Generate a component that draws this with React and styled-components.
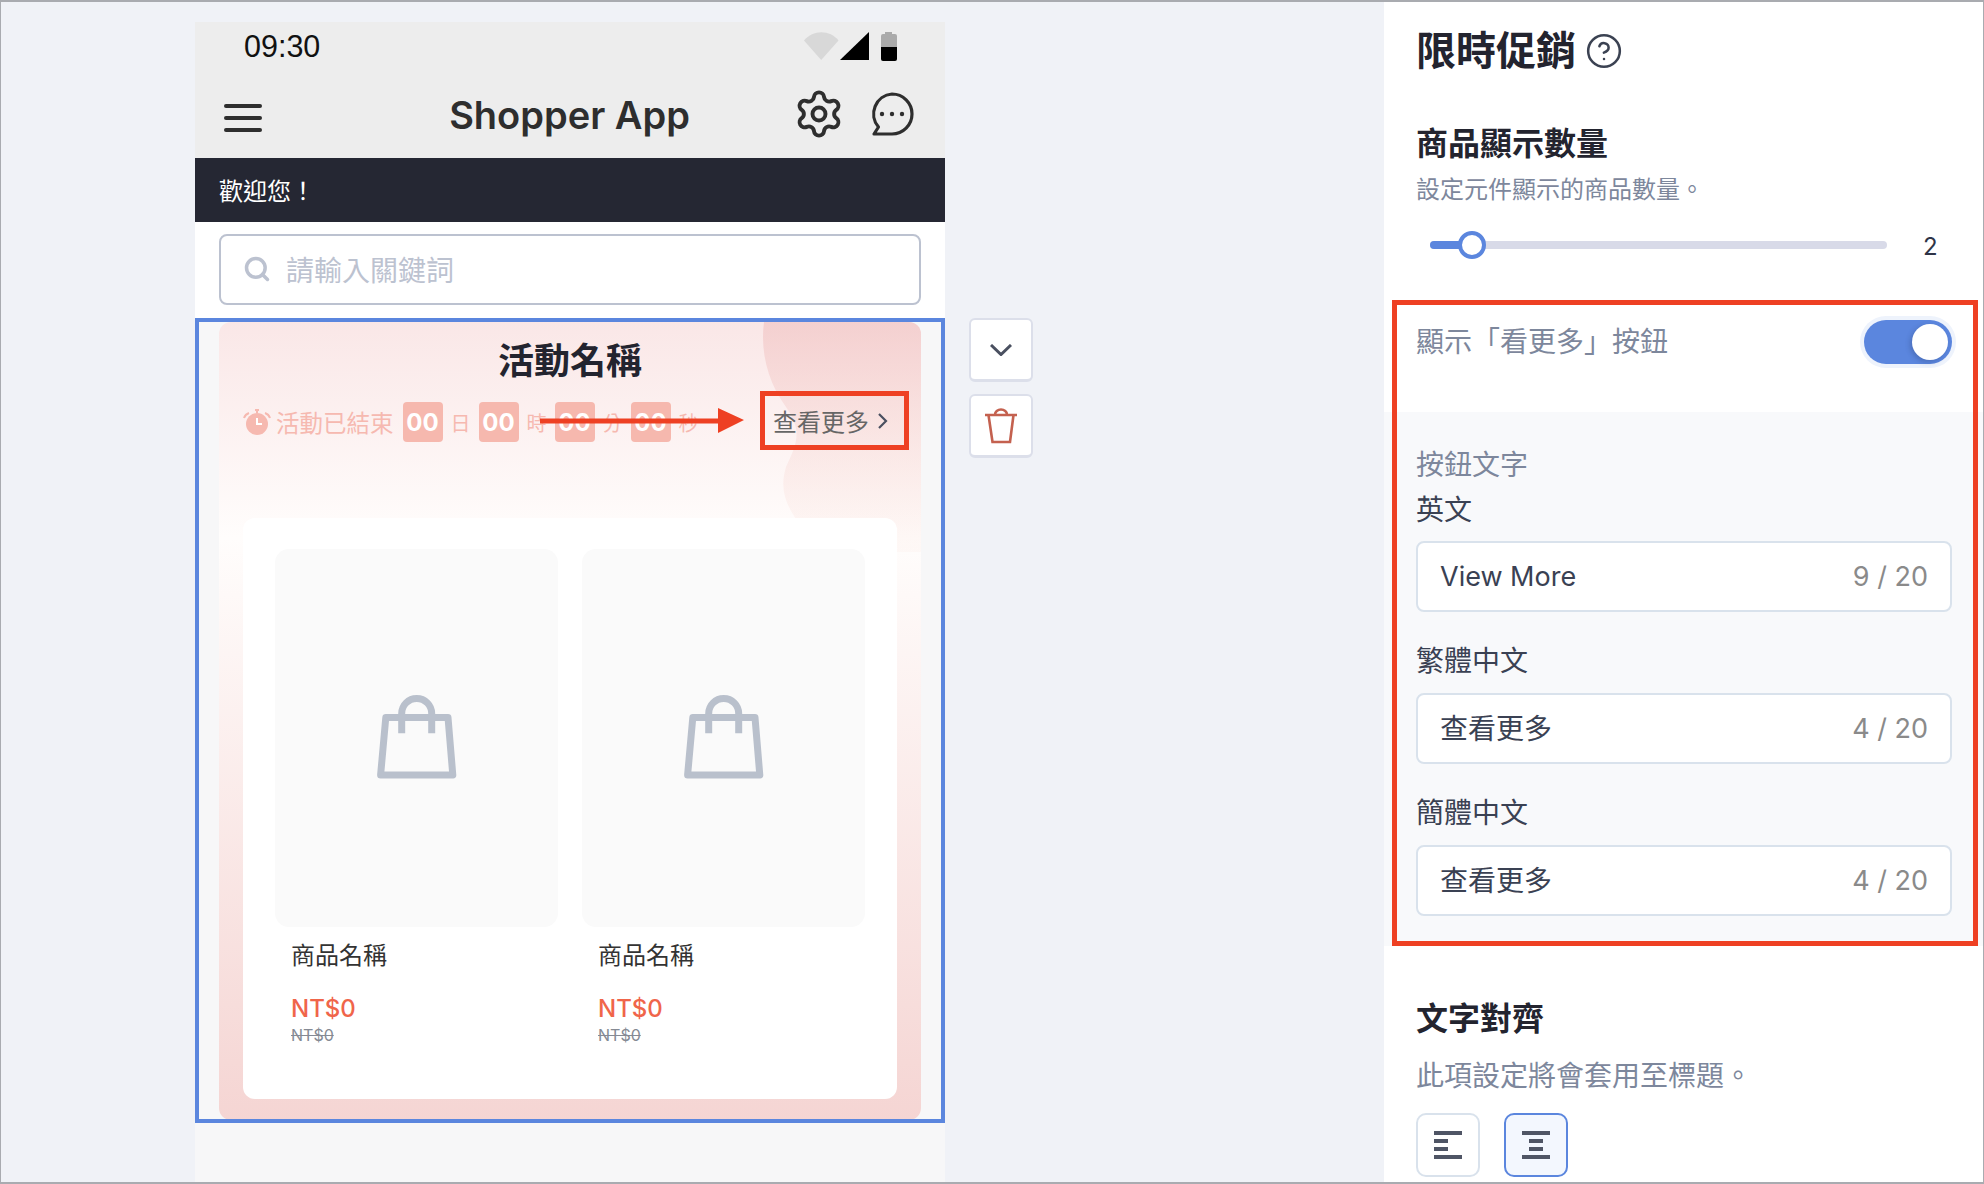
import React from "react";
import styled, { createGlobalStyle } from "styled-components";
import { Settings, Search, CircleHelp } from "lucide-react";

const GlobalStyle = createGlobalStyle`
  * { box-sizing: border-box; }
  html, body { margin: 0; padding: 0; }
  body {
    font-family: Inter, "Noto Sans CJK TC", sans-serif;
    background: #f0f2f7;
  }
`;

const Frame = styled.div`
  width: 1984px;
  height: 1184px;
  display: flex;
  overflow: hidden;
  background: #f0f2f7;
  border: solid #a9abb0;
  border-width: 2px 1px;
`;

const Stage = styled.div`
  flex: 1;
  display: flex;
  align-items: flex-start;
  padding: 20px 0 0 194px;
  gap: 24px;
`;

const Phone = styled.div`
  width: 750px;
  height: 1160px;
  display: flex;
  flex-direction: column;
  background: #f7f7f8;
`;

const PhoneTop = styled.header`
  height: 136px;
  background: #ededed;
`;

const StatusBar = styled.div`
  height: 48px;
  padding: 0 48px 0 49px;
  display: flex;
  align-items: center;
  justify-content: space-between;
`;

const Clock = styled.span`
  font-family: "Liberation Sans", sans-serif;
  font-size: 30.5px;
  color: #111;
`;

const StatusIcons = styled.div`
  display: flex;
  align-items: center;
`;

const NavBar = styled.div`
  height: 88px;
  padding: 0 30px 0 29px;
  display: grid;
  grid-template-columns: 1fr auto 1fr;
  align-items: center;
`;

const Burger = styled.div`
  width: 38px;
  margin-top: 8px;
  display: flex;
  flex-direction: column;
  gap: 8px;
  span {
    height: 4px;
    border-radius: 2px;
    background: #2e2e2e;
  }
`;

const AppTitle = styled.h1`
  margin: 2px 0 0;
  font-size: 38px;
  line-height: 48px;
  font-weight: 600;
  color: #2e2e2e;
`;

const NavIcons = styled.div`
  display: flex;
  justify-content: flex-end;
  align-items: center;
  gap: 24px;
`;

const Banner = styled.div`
  height: 64px;
  padding: 0 24px 2px;
  display: flex;
  align-items: center;
  background: #252733;
  color: #fff;
  font-size: 24px;
`;

const SearchWrap = styled.div`
  height: 96px;
  padding: 12px 24px 13px 24px;
  background: #fff;
`;

const SearchBox = styled.div`
  height: 71px;
  padding: 0 22px 2px;
  display: flex;
  align-items: center;
  gap: 15px;
  background: #fff;
  border: 2px solid #bcc2d0;
  border-radius: 8px;
  color: #bcc2d0;
  font-size: 28px;
`;

const SelectedBlock = styled.section`
  height: 805px;
  padding: 0 20px;
  overflow: hidden;
  border: 4px solid #5b86de;
`;

const Campaign = styled.div`
  position: relative;
  height: 798px;
  border-radius: 12px;
  overflow: hidden;
  background: linear-gradient(180deg, #fae7e7 0%, #fffdfc 27%, #f5d5d3 100%);
`;

const Blob = styled.svg`
  position: absolute;
  top: 0;
  right: 0;
`;

const CampaignBody = styled.div`
  position: relative;
  padding: 15px 24px 0;
`;

const CampaignTitle = styled.h2`
  margin: 0;
  text-align: center;
  font-size: 36px;
  line-height: 48px;
  font-weight: 700;
  color: #23242f;
`;

const TimerRow = styled.div`
  position: relative;
  height: 40px;
  margin-top: 17px;
  display: flex;
  align-items: center;
`;

const ClockIcon = styled.svg`
  margin-right: 5px;
`;

const TimerText = styled.span`
  margin-right: 9px;
  font-size: 23.5px;
  color: #f6b9b0;
`;

const TimeBox = styled.span`
  width: 40px;
  height: 40px;
  display: flex;
  align-items: center;
  justify-content: center;
  border-radius: 4px;
  background: #f6b8ae;
  color: #fff;
  font-size: 24px;
  font-weight: 700;
`;

const TimeUnit = styled.span`
  width: 36px;
  text-align: center;
  font-size: 20px;
  color: #f6b9b0;
`;

const SeeMore = styled.a`
  position: absolute;
  right: 9px;
  top: 0;
  height: 40px;
  padding-bottom: 3px;
  display: flex;
  align-items: center;
  gap: 9px;
  font-size: 24px;
  color: #666;
`;

const RedBox = styled.span`
  position: absolute;
  left: -13px;
  right: -21px;
  top: -11px;
  bottom: -8px;
  border: 5px solid #ee4023;
`;

const Arrow = styled.svg`
  position: absolute;
  left: 297px;
  top: 6px;
`;

const ProductCard = styled.div`
  height: 581px;
  margin-top: 76px;
  padding: 31px 32px 0;
  display: grid;
  grid-template-columns: 283px 283px;
  gap: 24px;
  background: #fff;
  border-radius: 12px;
`;

const Product = styled.div`
  display: flex;
  flex-direction: column;
`;

const ProductImage = styled.div`
  height: 378px;
  display: flex;
  align-items: center;
  justify-content: center;
  padding-bottom: 3px;
  background: #fafafa;
  border-radius: 14px;
`;

const ProductName = styled.div`
  margin: 12px 0 0 16px;
  font-size: 24px;
  line-height: 34px;
  color: #333;
`;

const Price = styled.div`
  margin: 21px 0 0 16px;
  font-size: 24px;
  line-height: 30px;
  font-weight: 500;
  color: #f0654a;
`;

const OldPrice = styled.div`
  margin: 0 0 0 16px;
  font-size: 16px;
  line-height: 22px;
  color: #858a94;
  text-decoration: line-through;
`;

const SideTools = styled.div`
  margin-top: 296px;
  display: flex;
  flex-direction: column;
  gap: 12px;
`;

const ToolButton = styled.button`
  width: 64px;
  height: 64px;
  padding: 0;
  display: flex;
  align-items: center;
  justify-content: center;
  background: #fff;
  border: 2px solid #dcdfea;
  border-bottom-width: 3px;
  border-radius: 6px;
`;

const Panel = styled.aside`
  width: 599px;
  flex-shrink: 0;
  background: #fff;
  overflow: hidden;
`;

const PanelHead = styled.div`
  padding: 22px 32px 0;
  display: flex;
  align-items: center;
  gap: 9px;
  h2 {
    margin: 0;
    font-size: 40px;
    line-height: 54px;
    font-weight: 700;
    color: #23242f;
  }
`;

const SectionTitle = styled.h3`
  margin: ${(p) => p.$top}px 32px 0;
  font-size: 32px;
  line-height: 44px;
  font-weight: 700;
  color: #23242f;
`;

const Hint = styled.p`
  margin: ${(p) => p.$top}px 32px 0;
  font-size: ${(p) => p.$size}px;
  line-height: ${(p) => (p.$size > 24 ? 44 : 36)}px;
  color: #7d879c;
`;

const SliderRow = styled.div`
  height: 28px;
  margin: 23px 0 0 46px;
  display: flex;
  align-items: center;
`;

const SliderTrack = styled.div`
  position: relative;
  width: 457px;
  height: 8px;
  border-radius: 4px;
  background: #d8dae8;
`;

const SliderFill = styled.div`
  height: 100%;
  border-radius: 4px;
  background: #5b86de;
`;

const SliderThumb = styled.div`
  position: absolute;
  left: 28px;
  top: -10px;
  width: 28px;
  height: 28px;
  border-radius: 50%;
  background: #fff;
  border: 4px solid #5b86de;
`;

const SliderValue = styled.span`
  margin: 2px 0 0 36px;
  font-size: 24px;
  color: #2e3447;
`;

const Highlighted = styled.section`
  position: relative;
  margin-top: 41px;
`;

const RedFrame = styled.div`
  position: absolute;
  inset: 0 5px 0 8px;
  border: 5px solid #ee4023;
  pointer-events: none;
`;

const ToggleRow = styled.div`
  height: 112px;
  padding: 20px 31px 0 32px;
  display: flex;
  align-items: flex-start;
  justify-content: space-between;
  font-size: 28px;
  line-height: 44px;
  color: #7d879c;
`;

const Toggle = styled.div`
  width: 88px;
  height: 44px;
  padding: 4px;
  display: flex;
  justify-content: flex-end;
  border-radius: 22px;
  background: #5b86de;
  box-shadow: 0 0 0 4px #eef3fc;
  span {
    width: 36px;
    height: 36px;
    border-radius: 50%;
    background: #fff;
    box-shadow: -2px 2px 5px rgba(40, 60, 110, 0.3);
  }
`;

const ButtonText = styled.div`
  padding: 33px 31px 30px 32px;
  background: #f8f9fb;
`;

const GroupLabel = styled.div`
  font-size: 28px;
  line-height: 40px;
  color: #7d879c;
`;

const Field = styled.div`
  margin-top: ${(p) => p.$top}px;
`;

const FieldLabel = styled.div`
  font-size: 28px;
  line-height: 40px;
  color: #3a4153;
`;

const TextInput = styled.div`
  height: 71px;
  margin-top: ${(p) => p.$gap}px;
  padding: 0 22px;
  display: flex;
  align-items: center;
  justify-content: space-between;
  background: #fff;
  border: 2px solid #d9e2ec;
  border-radius: 8px;
  font-size: ${(p) => p.$size}px;
  color: #3a4153;
`;

const InputValue = styled.span`
  margin-bottom: ${(p) => p.$lift}px;
`;

const Counter = styled.span`
  font-size: 27px;
  color: #8a8a8a;
`;

const AlignRow = styled.div`
  margin: 15px 32px 0;
  display: flex;
  gap: 24px;
`;

const AlignButton = styled.button`
  width: 64px;
  height: 64px;
  padding: 0;
  display: flex;
  flex-direction: column;
  align-items: ${(p) => (p.$active ? "center" : "flex-start")};
  justify-content: center;
  gap: 4px;
  padding-left: ${(p) => (p.$active ? 0 : 16)}px;
  background: ${(p) => (p.$active ? "#f3f7fe" : "#fff")};
  border: 2px solid ${(p) => (p.$active ? "#5b86de" : "#d9e2ec")};
  border-radius: 10px;
`;

const AlignLine = styled.span`
  width: ${(p) => (p.$short ? 14 : 28)}px;
  height: 4px;
  background: #4f5565;
`;

const WifiIcon = () => (
  <svg width="35" height="28" viewBox="0 0 35 28">
    <path d="M0 8.5C9-2.5 26-2.5 34.500 8.500L17.200 28Z" fill="#d8d8d8" />
  </svg>
);

const SignalIcon = () => (
  <svg width="29" height="28" viewBox="0 0 29 28" style={{ marginLeft: 1 }}>
    <path d="M0 28L29 0V28Z" fill="#000" />
  </svg>
);

const BatteryIcon = () => (
  <svg width="16" height="30" viewBox="0 0 16 30" style={{ marginLeft: 12 }}>
    <path d="M4 3V1h7v2h3a2 2 0 0 1 2 2v11H0V5a2 2 0 0 1 2-2Z" fill="#aaa" />
    <path d="M0 16h16v12a2 2 0 0 1-2 2H2a2 2 0 0 1-2-2Z" fill="#000" />
  </svg>
);

const ChatIcon = () => (
  <svg width="46" height="46" viewBox="0 0 46 46" fill="none">
    <path
      d="M23 3a20 20 0 0 1 0 40H5l4.500-7A20 20 0 0 1 23 3Z"
      stroke="#2e2e2e"
      strokeWidth="3.200"
      strokeLinejoin="round"
    />
    <circle cx="13" cy="23" r="2.200" fill="#2e2e2e" />
    <circle cx="23" cy="23" r="2.200" fill="#2e2e2e" />
    <circle cx="33" cy="23" r="2.200" fill="#2e2e2e" />
  </svg>
);

const BagIcon = () => (
  <svg width="80" height="84" viewBox="0 0 80 84" fill="none" stroke="#b9c0cc" strokeWidth="7">
    <path d="M8.800 22.500H71L75.800 80H3.600Z" strokeLinejoin="round" />
    <path d="M24.700 38.300V18.500a15 15 0 0 1 30 0V38.300" />
  </svg>
);

const TimerClock = () => (
  <ClockIcon width="28" height="26" viewBox="0 0 28 26">
    <circle cx="14" cy="15" r="11" fill="#f6b9b0" />
    <path d="M12 1h4M14 1v3" stroke="#f6b9b0" strokeWidth="2" />
    <path d="M1 9a8 8 0 0 1 5-5M27 9a8 8 0 0 0-5-5" stroke="#f6b9b0" strokeWidth="2" fill="none" />
    <path d="M14 9v6h5" stroke="#fff" strokeWidth="2" fill="none" />
  </ClockIcon>
);

const TrashIcon = () => (
  <svg width="32" height="36" viewBox="0 0 32 36" fill="none" stroke="#c4614f" strokeWidth="2.600">
    <path d="M0 7h32M10 6.500a6 5 0 0 1 12 0M3.500 7l4 27H25l3.500-27" />
  </svg>
);

const Chevron = () => (
  <svg width="22" height="12" viewBox="0 0 22 12" fill="none" stroke="#4a5060" strokeWidth="3">
    <path d="M1 1l10 9.500L21 1" />
  </svg>
);

const countdown = [
  ["00", "日"],
  ["00", "時"],
  ["00", "分"],
  ["00", "秒"],
];

const fields = [
  { label: "英文", value: "View More", count: "9 / 20", top: 5, gap: 11, size: 27, lift: 0 },
  { label: "繁體中文", value: "查看更多", count: "4 / 20", top: 29, gap: 12, size: 28, lift: 3 },
  { label: "簡體中文", value: "查看更多", count: "4 / 20", top: 29, gap: 12, size: 28, lift: 3 },
];

const ProductItem = () => (
  <Product>
    <ProductImage>
      <BagIcon />
    </ProductImage>
    <ProductName>商品名稱</ProductName>
    <Price>NT$0</Price>
    <OldPrice>NT$0</OldPrice>
  </Product>
);

const App = () => {
  return (
    <Frame>
      <GlobalStyle />
      <Stage>
        <Phone>
          <PhoneTop>
            <StatusBar>
              <Clock>09:30</Clock>
              <StatusIcons>
                <WifiIcon />
                <SignalIcon />
                <BatteryIcon />
              </StatusIcons>
            </StatusBar>
            <NavBar>
              <Burger>
                <span />
                <span />
                <span />
              </Burger>
              <AppTitle>Shopper App</AppTitle>
              <NavIcons>
                <Settings size={52} strokeWidth={1.8} color="#2e2e2e" />
                <ChatIcon />
              </NavIcons>
            </NavBar>
          </PhoneTop>
          <Banner>歡迎您！</Banner>
          <SearchWrap>
            <SearchBox>
              <Search size={28} strokeWidth={3} />
              請輸入關鍵詞
            </SearchBox>
          </SearchWrap>
          <SelectedBlock>
            <Campaign>
              <Blob width="159" height="230" viewBox="0 0 159 230">
                <defs>
                  <linearGradient id="blobFill" x1="0" y1="0" x2="0" y2="1">
                    <stop offset="0" stopColor="#f2c8c8" stopOpacity="0.75" />
                    <stop offset="1" stopColor="#fbe6e0" stopOpacity="0.2" />
                  </linearGradient>
                </defs>
                <path
                  d="M2 0C-2 30 6 60 24 85C40 108 36 120 24 145C18 165 22 180 36 200V230H159V0Z"
                  fill="url(#blobFill)"
                />
              </Blob>
              <CampaignBody>
                <CampaignTitle>活動名稱</CampaignTitle>
                <TimerRow>
                  <TimerClock />
                  <TimerText>活動已結束</TimerText>
                  {countdown.map(([value, unit]) => (
                    <React.Fragment key={unit}>
                      <TimeBox>{value}</TimeBox>
                      <TimeUnit>{unit}</TimeUnit>
                    </React.Fragment>
                  ))}
                  <Arrow width="204" height="26" viewBox="0 0 204 26">
                    <path d="M0 10.500H178V0L204 12L178 25V15.500H0Z" fill="#ee4023" />
                  </Arrow>
                  <SeeMore>
                    查看更多
                    <svg width="10" height="16" viewBox="0 0 10 16" fill="none" stroke="#4a5060" strokeWidth="2.200">
                      <path d="M1 1l7 7-7 7" />
                    </svg>
                    <RedBox />
                  </SeeMore>
                </TimerRow>
                <ProductCard>
                  <ProductItem />
                  <ProductItem />
                </ProductCard>
              </CampaignBody>
            </Campaign>
          </SelectedBlock>
        </Phone>
        <SideTools>
          <ToolButton>
            <Chevron />
          </ToolButton>
          <ToolButton>
            <TrashIcon />
          </ToolButton>
        </SideTools>
      </Stage>
      <Panel>
        <PanelHead>
          <h2>限時促銷</h2>
          <CircleHelp size={38} strokeWidth={1.6} color="#3b4252" />
        </PanelHead>
        <SectionTitle $top={44}>商品顯示數量</SectionTitle>
        <Hint $top={6} $size={24}>設定元件顯示的商品數量。</Hint>
        <SliderRow>
          <SliderTrack>
            <SliderFill style={{ width: 42 }} />
            <SliderThumb />
          </SliderTrack>
          <SliderValue>2</SliderValue>
        </SliderRow>
        <Highlighted>
          <ToggleRow>
            顯示「看更多」按鈕
            <Toggle>
              <span />
            </Toggle>
          </ToggleRow>
          <ButtonText>
            <GroupLabel>按鈕文字</GroupLabel>
            {fields.map((field) => (
              <Field key={field.label} $top={field.top}>
                <FieldLabel>{field.label}</FieldLabel>
                <TextInput $size={field.size} $gap={field.gap}>
                  <InputValue $lift={field.lift}>{field.value}</InputValue>
                  <Counter>{field.count}</Counter>
                </TextInput>
              </Field>
            ))}
          </ButtonText>
          <RedFrame />
        </Highlighted>
        <SectionTitle $top={51}>文字對齊</SectionTitle>
        <Hint $top={13} $size={28}>此項設定將會套用至標題。</Hint>
        <AlignRow>
          <AlignButton>
            <AlignLine />
            <AlignLine $short />
            <AlignLine $short />
            <AlignLine />
          </AlignButton>
          <AlignButton $active>
            <AlignLine />
            <AlignLine $short />
            <AlignLine $short />
            <AlignLine />
          </AlignButton>
        </AlignRow>
      </Panel>
    </Frame>
  );
};

export default App;
